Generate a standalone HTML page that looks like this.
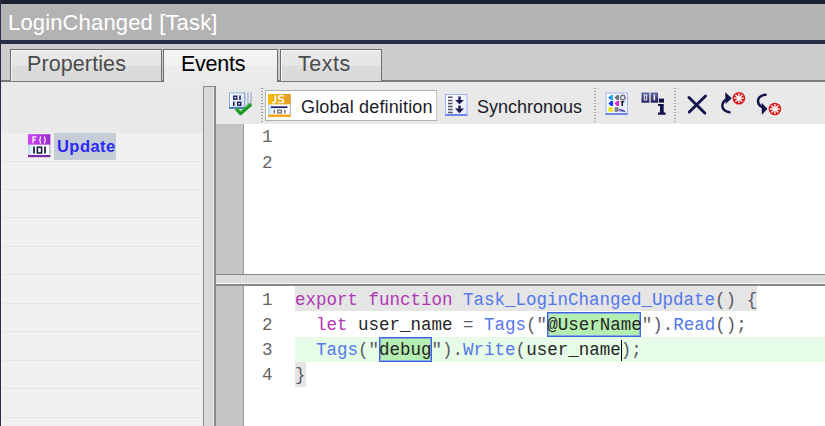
<!DOCTYPE html>
<html><head><meta charset="utf-8">
<style>
*{margin:0;padding:0;box-sizing:border-box}
html,body{width:825px;height:426px;overflow:hidden;background:#ebebeb;font-family:"Liberation Sans",sans-serif}
.a{position:absolute}
#topband{left:0;top:0;width:825px;height:4px;background:#1c2030}
#title{left:0;top:4px;width:825px;height:36px;background:#b3b3b3}
#titletxt{left:8px;top:10px;font-size:22px;letter-spacing:0.15px;color:#fff;white-space:nowrap;line-height:25px}
#midband{left:0;top:40px;width:825px;height:4px;background:#283048}
#leftb{left:0;top:0;width:1px;height:426px;background:#283048}
#tabbar{left:1px;top:44px;width:824px;height:37px;background:#cdcdcd}
#tabline{left:1px;top:80px;width:824px;height:2px;background:#7a7a7a}
.tab{border:1px solid #6e6e6e;border-bottom:none;background:linear-gradient(#e9e9e9 0,#e6e6e6 48%,#dcdcdc 52%,#dadada 100%);box-shadow:inset 1px 1px 0 #f6f6f6}
.tabt{font-size:21.5px;line-height:24px;color:#4c4c4c;white-space:nowrap}
#tabE{background:linear-gradient(#f4f4f4 0,#f1f1f1 48%,#ececec 52%,#ebebeb 100%);box-shadow:none}
#panel{left:1px;top:82px;width:824px;height:344px;background:#e9e9e9}
#lp{left:1px;top:133px;width:202px;height:293px;background:#f0f0f0}
.rl{left:3px;width:200px;height:1px;background:#e5e5e5}
#vspl{left:203px;top:86px;width:13px;height:340px;background:#d9d9d9;border-left:1px solid #8c8c8c;border-top:1px solid #8c8c8c;border-right:2px solid #8a8a8a;box-shadow:inset -1px 0 0 #eeeeee}
#gut1{left:216px;top:124px;width:28px;height:151px;background:#c4c4c4;border-right:1px solid #9a9a9a}
#ed1{left:244px;top:124px;width:581px;height:150px;background:#fff}
#hspl{left:216px;top:274px;width:609px;height:12px;background:#dcdcdc;border-top:1px solid #888;border-bottom:2px solid #888;box-shadow:inset 0 -1px 0 #fafafa}
#gut2{left:216px;top:286px;width:28px;height:140px;background:#c4c4c4;border-right:1px solid #9a9a9a}
#ed2{left:244px;top:286px;width:581px;height:140px;background:#fff}
.ln{font-family:"Liberation Mono",monospace;font-size:17.5px;color:#646464;line-height:20px;white-space:pre}
.code{font-family:"Liberation Mono",monospace;font-size:17.5px;line-height:20px;white-space:pre;color:#262626}
.kw{color:#b038b4}.fn{color:#5478ec}.pu{color:#5a5a66}
.hl{}
.box{background:#b4eeb0;border:1px solid #3a66de;box-shadow:inset 0 0 0 1px #86a6dc}
.sep{width:2px;height:34px;background:repeating-linear-gradient(#a2a2a2 0 1px,transparent 1px 3px)}
.tbt{font-size:18px;color:#1c1c28;white-space:nowrap;line-height:20px}
</style></head><body>
<div class="a" id="panel"></div>
<div class="a" id="topband"></div>
<div class="a" id="title"></div>
<div class="a" id="titletxt">LoginChanged [Task]</div>
<div class="a" id="midband"></div>
<div class="a" id="tabbar"></div>
<div class="a" id="tabline"></div>
<div class="a tab" style="left:10px;top:49px;width:152px;height:32px"></div>
<div class="a tabt" style="left:27px;top:52px;letter-spacing:0.1px">Properties</div>
<div class="a tab" id="tabE" style="left:163px;top:49px;width:115px;height:33px"></div>
<div class="a tabt" style="left:181px;top:52px;color:#000;letter-spacing:-0.25px">Events</div>
<div class="a tab" style="left:280px;top:49px;width:102px;height:32px"></div>
<div class="a tabt" style="left:298px;top:52px;letter-spacing:0.5px">Texts</div>
<div class="a" id="leftb"></div>

<!-- left panel -->
<div class="a" id="lp"></div>
<div class="a rl" style="top:161px"></div>
<div class="a rl" style="top:189px"></div>
<div class="a rl" style="top:217px"></div>
<div class="a rl" style="top:246px"></div>
<div class="a rl" style="top:274px"></div>
<div class="a rl" style="top:303px"></div>
<div class="a rl" style="top:331px"></div>
<div class="a rl" style="top:360px"></div>
<div class="a rl" style="top:388px"></div>
<div class="a rl" style="top:417px"></div>
<div class="a" style="left:54px;top:133px;width:62px;height:27px;background:#c6cdd6"></div>
<div class="a" style="left:57px;top:136px;font-size:16.5px;font-weight:bold;letter-spacing:0.45px;line-height:20px;color:#2a2af6">Update</div>


<div class="a" id="vspl"></div>

<!-- toolbar -->
<div class="a sep" style="left:261px;top:88px"></div>
<div class="a" style="left:265px;top:90px;width:172px;height:31px;background:#fff;border:1px solid #b0b0b0;border-right-color:#c8c8c8"></div>
<div class="a tbt" style="left:301px;top:97px;letter-spacing:0.15px">Global definition</div>
<div class="a tbt" style="left:477px;top:97px">Synchronous</div>
<div class="a sep" style="left:594px;top:88px"></div>
<div class="a sep" style="left:674px;top:88px"></div>

<!-- editors -->
<div class="a" id="gut1"></div>
<div class="a" id="ed1"></div>
<div class="a ln" style="left:262px;top:127px">1</div>
<div class="a ln" style="left:262px;top:153px">2</div>
<div class="a" id="hspl"></div>
<div class="a" id="gut2"></div>
<div class="a" id="ed2"></div>
<div class="a" style="left:295px;top:286px;width:462px;height:25px;background:#e5e5e5"></div>
<div class="a" style="left:295px;top:337px;width:530px;height:25px;background:#e6fce6"></div>
<div class="a" style="left:295px;top:362px;width:11px;height:25px;background:#e5e5e5"></div>
<div class="a box" style="left:547px;top:312px;width:94px;height:25px"></div>
<div class="a box" style="left:379px;top:337px;width:53px;height:25px"></div>
<div class="a ln" style="left:262px;top:290px">1</div>
<div class="a ln" style="left:262px;top:315px">2</div>
<div class="a ln" style="left:262px;top:340px">3</div>
<div class="a ln" style="left:262px;top:365px">4</div>
<div class="a code" style="left:295px;top:290px"><span class="kw">export</span> <span class="kw">function</span> <span class="fn">Task_LoginChanged_Update</span><span class="pu">()</span> <span class="pu">{</span></div>
<div class="a code" style="left:295px;top:315px">  <span class="kw">let</span> user_name <span class="pu">=</span> <span class="fn">Tags</span><span class="pu">("</span><span class="hl">@UserName</span><span class="pu">")</span><span class="pu">.</span><span class="fn">Read</span><span class="pu">();</span></div>
<div class="a code" style="left:295px;top:340px">  <span class="fn">Tags</span><span class="pu">("</span><span class="hl">debug</span><span class="pu">")</span><span class="pu">.</span><span class="fn">Write</span><span class="pu">(</span>user_name<span class="pu">);</span></div>
<div class="a code" style="left:295px;top:365px"><span class="pu">}</span></div>
<div class="a" style="left:621px;top:340px;width:1px;height:21px;background:#000"></div>

<svg class="a" style="left:0;top:0" width="825" height="426" viewBox="0 0 825 426">
 <defs>
  <linearGradient id="gDoc" x1="0" y1="0" x2="1" y2="1"><stop offset="0" stop-color="#ffffff"/><stop offset="1" stop-color="#cfe0f4"/></linearGradient>
  <linearGradient id="gLav" x1="0" y1="0" x2="1" y2="1"><stop offset="0" stop-color="#ffffff"/><stop offset="1" stop-color="#e4e8fb"/></linearGradient>
  <linearGradient id="gOr" x1="0" y1="0" x2="1" y2="0"><stop offset="0" stop-color="#f9bb14"/><stop offset="1" stop-color="#e49c22"/></linearGradient>
  <linearGradient id="gPur" x1="0" y1="0" x2="1" y2="0"><stop offset="0" stop-color="#cc44f4"/><stop offset="1" stop-color="#9a2ecc"/></linearGradient>
  <linearGradient id="gWB" x1="0" y1="0" x2="1" y2="0"><stop offset="0" stop-color="#b8dcf4"/><stop offset="0.25" stop-color="#f4faff"/><stop offset="1" stop-color="#ffffff"/></linearGradient>
  <linearGradient id="gNavy" x1="0" y1="0" x2="0" y2="1"><stop offset="0" stop-color="#6a6aa8"/><stop offset="1" stop-color="#1c1c58"/></linearGradient>
  <radialGradient id="gRed"><stop offset="0" stop-color="#ff6060"/><stop offset="1" stop-color="#d41818"/></radialGradient>
 </defs>
 <!-- F() icon -->
 <g>
  <rect x="28" y="134.2" width="22.4" height="10.6" fill="url(#gPur)"/>
  <rect x="28" y="144.8" width="22.4" height="10.4" fill="url(#gWB)"/>
  <rect x="28" y="155" width="22.4" height="2.2" fill="#7a2aaa"/>
  <rect x="49.4" y="144.8" width="1" height="10.4" fill="#9aa0b0"/>
  <path d="M33 143.2V136.8H36.4M33 139.8H35.8" stroke="#fff" stroke-width="1.2" fill="none"/>
  <path d="M40.6 136.6Q39 140 40.6 143.4M44.4 136.6Q46 140 44.4 143.4" stroke="#fff" stroke-width="1.2" fill="none"/>
  <rect x="33.2" y="146.6" width="1.7" height="6.9" fill="#141440"/>
  <rect x="37.4" y="147.2" width="4.2" height="5.8" fill="none" stroke="#141440" stroke-width="1.5"/>
  <rect x="44.2" y="146.6" width="1.7" height="6.9" fill="#141440"/>
 </g>
 <!-- check doc icon -->
 <g>
  <path d="M245 92.5V106M248 92.5V106M251 92.5V105" stroke="#8e9cb4" stroke-width="1"/>
  <path d="M246.3 92.5V106M249.3 92.5V106" stroke="#e8eef8" stroke-width="1"/>
  <rect x="229.5" y="93" width="15" height="15" fill="url(#gDoc)" stroke="#8ab0e0" stroke-width="1"/>
  <rect x="229" y="107" width="16" height="1.8" fill="#4a78b8"/>
  <rect x="233.7" y="96.2" width="3" height="3" fill="none" stroke="#1e2060" stroke-width="1.4"/>
  <rect x="239.2" y="95.5" width="1.6" height="4.4" fill="#1e2060"/>
  <rect x="233" y="101.6" width="1.6" height="4.4" fill="#1e2060"/>
  <rect x="237.7" y="102.3" width="3" height="3" fill="none" stroke="#1e2060" stroke-width="1.4"/>
  <path d="M236.2 108.4L240.5 113.4L251 104.2" stroke="#16961e" stroke-width="3.6" fill="none" stroke-linejoin="round"/>
  <path d="M237 107.8L240.6 111.8L250.2 103.6" stroke="#4cc850" stroke-width="1" fill="none"/>
 </g>
 <!-- JS icon -->
 <g>
  <rect x="268" y="94" width="22.8" height="10.6" fill="url(#gOr)"/>
  <rect x="268" y="104.6" width="22.8" height="10" fill="url(#gWB)"/>
  <rect x="268" y="114.5" width="22.8" height="2.5" fill="#f0a822"/>
  <rect x="289.8" y="104.6" width="1" height="10" fill="#a0a8b8"/>
  <path d="M275.4 95.6V100.6Q275.4 102.6 273.6 102.6H272.2" stroke="#fff" stroke-width="1.6" fill="none"/>
  <path d="M283.6 96.4Q282.8 95.6 281 95.6Q278.6 95.6 278.6 97.4Q278.6 99 281 99.2Q283.6 99.4 283.6 101Q283.6 102.6 281 102.6Q279.2 102.6 278.4 101.8" stroke="#fff" stroke-width="1.5" fill="none"/>
  <rect x="271" y="106.3" width="16.5" height="1.8" fill="#26266e"/>
  <rect x="273.6" y="109.8" width="1.5" height="3.6" fill="#707070"/>
  <rect x="277.8" y="110.3" width="3.6" height="2.6" fill="none" stroke="#707070" stroke-width="1.3"/>
  <rect x="284" y="109.8" width="1.5" height="3.6" fill="#707070"/>
 </g>
 <!-- sync icon -->
 <g>
  <rect x="445.5" y="94.5" width="21.5" height="20.5" fill="url(#gLav)" stroke="#a4b2f2" stroke-width="1"/>
  <rect x="445" y="114" width="22.4" height="2" fill="#7484e4"/>
  <path d="M448 97.3H452.6M448 100.5H452.6M448 103.5H452.6M448 106.5H452.6M448 109.6H452.6M448 112.5H452.6" stroke="#55555f" stroke-width="1.5"/>
  <path d="M459.5 96.5V101.5M459.5 105.5V110" stroke="#1a1a50" stroke-width="2.4"/>
  <path d="M455 100H464L459.5 104.3Z M455 108.6H464L459.5 113.2Z" fill="#1a1a50"/>
 </g>
 <!-- grid icon -->
 <g>
  <rect x="606" y="93" width="21.5" height="21" fill="url(#gLav)" stroke="#a4b2f2" stroke-width="1"/>
  <rect x="605.5" y="113" width="22.2" height="2" fill="#7484e4"/>
  <path d="M608.4 97.5L611 95H613V100H611Z" fill="#18b8f0"/>
  <path d="M608.6 98L610.5 96.5V99.5Z" fill="#1840d0"/>
  <path d="M614.5 97.5L617 95H619V100H617Z" fill="#707078"/>
  <circle cx="622.8" cy="97.5" r="2.3" fill="none" stroke="#707080" stroke-width="1.4"/>
  <path d="M608.4 103.5L611 101H613V106H611Z" fill="#1838e8"/>
  <path d="M614.5 103.5L617 101H619V106H617Z" fill="#e020e0"/>
  <path d="M620.2 101H624.8L623 103V106H621.5V103Z" fill="#101020"/>
  <path d="M620 101H621.5V102.5Z" fill="#f0e020"/><path d="M623.5 101H625V102.5Z" fill="#20e0f0"/>
  <rect x="608.4" y="107.2" width="4.4" height="4.6" fill="#e8e818"/>
  <rect x="614.6" y="107.2" width="4" height="4.6" fill="#808088"/>
  <path d="M619 109.5L621 108.5L625 110.5V112H620Z" fill="#b0a8f0"/>
  <path d="M619 109.5L622 110.5L625 111.5" stroke="#2a1a80" stroke-width="1"/>
 </g>
 <!-- 01 i icon -->
 <g>
  <rect x="641.5" y="92.5" width="7.8" height="10.2" fill="url(#gNavy)"/>
  <rect x="650.7" y="92.5" width="7.3" height="10.2" fill="url(#gNavy)"/>
  <rect x="644.3" y="95" width="2.4" height="5" fill="none" stroke="#f0f0ff" stroke-width="1"/>
  <rect x="653.5" y="94.5" width="1.6" height="5.8" fill="#f0f0ff"/>
  <rect x="658.8" y="98.6" width="5.2" height="4" fill="#10104a"/>
  <path d="M658 104H663.7V112.6H665.6V114.7H658V112.6H660V106H658Z" fill="#10104a"/>
 </g>
 <!-- X icon -->
 <path d="M689 97.5L704.8 113M705.5 96L689.3 112" stroke="#16164e" stroke-width="3" stroke-linecap="round"/>
 <!-- arrow up with red dot -->
 <g>
  <path d="M727.5 98.8Q722.3 101 722.3 106Q722.8 111 729.5 112.3" stroke="#12124a" stroke-width="2.5" fill="none" stroke-linecap="round"/>
  <path d="M725.2 92.2L731.8 98.2L725.5 104.1Z" fill="#12124a"/>
  <circle cx="738.9" cy="98.2" r="6.3" fill="#dc1c1c"/>
  <path d="M738.9 93.3V103.1M734 98.2H743.8M735.4 94.7L742.4 101.7M742.4 94.7L735.4 101.7" stroke="#fff" stroke-width="1.3"/>
  <circle cx="738.9" cy="98.2" r="1.6" fill="#fff"/>
 </g>
 <g>
  <path d="M765.5 94.8Q758.3 95.5 758 101Q758 105 762 107" stroke="#12124a" stroke-width="2.5" fill="none" stroke-linecap="round"/>
  <path d="M761.5 102.7L767.5 108.7L761.9 114.7Z" fill="#12124a"/>
  <circle cx="774.9" cy="109" r="6.3" fill="#dc1c1c"/>
  <path d="M774.9 104.1V113.9M770 109H779.8M771.4 105.5L778.4 112.5M778.4 105.5L771.4 112.5" stroke="#fff" stroke-width="1.3"/>
  <circle cx="774.9" cy="109" r="1.6" fill="#fff"/>
 </g>
</svg>
</body></html>
